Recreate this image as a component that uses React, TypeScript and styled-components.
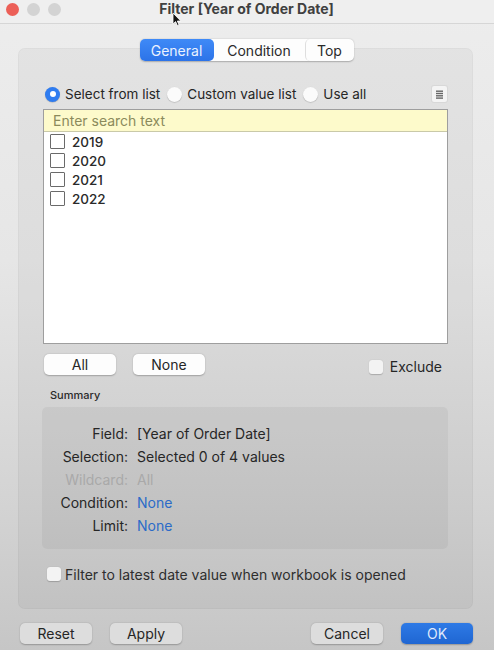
import React from "react";
import styled, { createGlobalStyle } from "styled-components";

const Global = createGlobalStyle`
  html, body { margin: 0; padding: 0; }
  body { width: 494px; height: 650px; overflow: hidden; font-family: Inter, "Noto Sans", "Liberation Sans", sans-serif; }
  * { box-sizing: border-box; }
`;

const Window = styled.div`
  position: relative;
  width: 494px;
  height: 650px;
  display: flex;
  flex-direction: column;
  background: linear-gradient(180deg, #ededed 0%, #e6e6e6 40%, #d2d2d2 80%, #c6c6c6 100%);
  color: #262626;
`;

const TitleBar = styled.div`
  height: 24px;
  flex: none;
  display: flex;
  align-items: center;
  padding-left: 6px;
  border-bottom: 1px solid #d6d6d6;
  background: #efefef;
  position: relative;
`;

const Light = styled.span<{ $c: string }>`
  width: 13px;
  height: 13px;
  border-radius: 50%;
  background: ${(p) => p.$c};
  margin-right: 8px;
  margin-top: -5px;
`;

const Title = styled.div`
  position: absolute;
  left: 0;
  right: 0;
  top: 0;
  padding-right: 1px;
  text-align: center;
  font-weight: 700;
  font-size: 14px;
  line-height: 17px;
  color: #404040;
`;

const Cursor = styled.svg`
  position: absolute;
  left: 172px;
  top: 12px;
`;

const Body = styled.div`
  flex: 1;
  display: flex;
  flex-direction: column;
  padding: 15px 21px 0 18px;
`;

const Tabs = styled.div`
  align-self: center;
  margin-left: 2px;
  display: flex;
  height: 22px;
  background: #fdfdfd;
  border-radius: 5px;
  box-shadow: 0 0.5px 1.5px rgba(0, 0, 0, 0.25);
  position: relative;
  z-index: 1;
`;

const Tab = styled.div<{ $w: number; $active?: boolean; $sep?: boolean }>`
  width: ${(p) => p.$w}px;
  display: flex;
  align-items: center;
  justify-content: center;
  font-size: 14px;
  border-radius: 5px;
  color: ${(p) => (p.$active ? "#eaf2ff" : "#2a2a2a")};
  background: ${(p) => (p.$active ? "linear-gradient(#3f8af7, #2c73e8)" : "transparent")};
  border-left: ${(p) => (p.$sep ? "1px solid #dedede" : "none")};
`;

const Group = styled.div`
  margin-top: -13px;
  height: 561px;
  background: rgba(0, 0, 0, 0.035);
  border-radius: 7px;
  border: 1px solid rgba(0, 0, 0, 0.03);
  padding: 36px 24px 0 24px;
  display: flex;
  flex-direction: column;
`;

const RadioRow = styled.div`
  display: flex;
  align-items: center;
  height: 18px;
  font-size: 13.5px;
`;

const Radio = styled.span<{ $on?: boolean }>`
  width: 15px;
  height: 15px;
  border-radius: 50%;
  margin: 0 5px 0 2px;
  background: ${(p) => (p.$on ? "#2f7cf0" : "#fbfbfb")};
  box-shadow: 0 0.5px 1px rgba(0, 0, 0, 0.25);
  display: flex;
  align-items: center;
  justify-content: center;
  &::after {
    content: "";
    width: 6px;
    height: 6px;
    border-radius: 50%;
    background: ${(p) => (p.$on ? "#fff" : "transparent")};
  }
`;

const RadioLabel = styled.span`
  margin-right: 5px;
`;

const MenuBtn = styled.div`
  margin-left: auto;
  margin-right: 1px;
  width: 15px;
  height: 16px;
  background: #f4f4f4;
  border-radius: 2px;
  box-shadow: 0 0 0 1px #d8d8d8;
  display: flex;
  align-items: center;
  justify-content: center;
`;

const ListBox = styled.div`
  margin-top: 6px;
  height: 235px;
  background: #fff;
  border: 1.5px solid #9e9e9e;
  display: flex;
  flex-direction: column;
`;

const Search = styled.div`
  height: 22px;
  background: #fdfacb;
  border-bottom: 1px solid #c9c9a8;
  font-size: 14px;
  color: #8b8a5c;
  padding-left: 9px;
  display: flex;
  align-items: center;
`;

const Items = styled.div`
  padding: 0 0 0 6px;
`;

const Item = styled.div`
  height: 19px;
  display: flex;
  align-items: center;
  font-size: 13.5px;
  font-weight: 500;
  color: #2a2a2a;
`;

const Check = styled.span<{ $size?: number; $soft?: boolean }>`
  width: ${(p) => p.$size ?? 15}px;
  height: ${(p) => p.$size ?? 15}px;
  border: ${(p) => (p.$soft ? "none" : "1.5px solid #6a6a6a")};
  border-radius: ${(p) => (p.$soft ? 3 : 1)}px;
  background: ${(p) => (p.$soft ? "#f3f3f3" : "#fff")};
  box-shadow: ${(p) => (p.$soft ? "0 0.5px 1px rgba(0,0,0,0.2)" : "none")};
  margin-right: 7px;
  flex: none;
`;

const ButtonRow = styled.div`
  margin-top: 10px;
  display: flex;
  align-items: center;
  height: 21px;
  padding-left: 1px;
`;

const Btn = styled.div<{ $gap?: number; $primary?: boolean; $dim?: boolean }>`
  width: 72px;
  height: 21px;
  margin-right: ${(p) => p.$gap ?? 0}px;
  border-radius: 5px;
  display: flex;
  align-items: center;
  justify-content: center;
  font-size: 14px;
  color: ${(p) => (p.$primary ? "#dfe9fb" : "#262626")};
  background: ${(p) =>
    p.$primary ? "linear-gradient(#2e7ae6, #1f66d2)" : p.$dim ? "#dddddd" : "#fdfdfd"};
  box-shadow: 0 0.5px 1.5px rgba(0, 0, 0, 0.25);
`;

const Exclude = styled.div`
  margin-left: auto;
  margin-right: 6px;
  margin-top: 4px;
  display: flex;
  align-items: center;
  font-size: 14px;
`;

const SummaryLabel = styled.div`
  margin-top: 14px;
  padding-left: 7px;
  font-size: 11px;
  font-weight: 500;
  line-height: 12px;
  color: #2a2a2a;
`;

const SummaryBox = styled.div`
  margin-top: 6px;
  margin-left: -1px;
  height: 142px;
  background: rgba(0, 0, 0, 0.045);
  border-radius: 5px;
  padding-top: 15px;
  display: grid;
  grid-template-columns: 86px 1fr;
  grid-auto-rows: 23px;
  column-gap: 9px;
  align-content: start;
  font-size: 14px;
`;

const Key = styled.div<{ $dim?: boolean }>`
  text-align: right;
  color: ${(p) => (p.$dim ? "#a9a9a9" : "#262626")};
  line-height: 23px;
`;

const Val = styled.div<{ $tone?: "dim" | "link" }>`
  line-height: 23px;
  color: ${(p) => (p.$tone === "dim" ? "#a9a9a9" : p.$tone === "link" ? "#2b6bc8" : "#262626")};
`;

const LatestRow = styled.div`
  margin-top: 16px;
  padding-left: 4px;
  display: flex;
  align-items: center;
  height: 18px;
  font-size: 14px;
  color: #2e2e2e;
  & > span:first-child {
    margin-right: 4px;
  }
`;

const Footer = styled.div`
  margin-top: 14px;
  display: flex;
  align-items: center;
  padding-left: 2px;
`;

const Spacer = styled.div`
  flex: 1;
`;

export default function App() {
  return (
    <>
      <Global />
      <Window>
        <TitleBar>
          <Light $c="#ec5f57" />
          <Light $c="#d3d3d3" />
          <Light $c="#d3d3d3" />
          <Title>Filter [Year of Order Date]</Title>
          <Cursor width="10" height="15" viewBox="0 0 10 15">
            <path d="M1 1 L1 12 L3.6 9.6 L5.4 13.6 L7 12.9 L5.3 9 L8.8 9 Z" fill="#111" stroke="#fff" strokeWidth="0.8" />
          </Cursor>
        </TitleBar>
        <Body>
          <Tabs>
            <Tab $w={74} $active>General</Tab>
            <Tab $w={91}>Condition</Tab>
            <Tab $w={49} $sep>Top</Tab>
          </Tabs>
          <Group>
            <RadioRow>
              <Radio $on />
              <RadioLabel>Select from list</RadioLabel>
              <Radio />
              <RadioLabel>Custom value list</RadioLabel>
              <Radio />
              <RadioLabel>Use all</RadioLabel>
              <MenuBtn>
                <svg width="9" height="9" viewBox="0 0 9 9">
                  <rect x="1" y="0.5" width="7" height="1.4" fill="#666" />
                  <rect x="1" y="2.8" width="7" height="1.4" fill="#666" />
                  <rect x="1" y="5.1" width="7" height="1.4" fill="#666" />
                  <rect x="1" y="7.4" width="7" height="1.4" fill="#666" />
                </svg>
              </MenuBtn>
            </RadioRow>
            <ListBox>
              <Search>Enter search text</Search>
              <Items>
                {["2019", "2020", "2021", "2022"].map((y) => (
                  <Item key={y}>
                    <Check />
                    {y}
                  </Item>
                ))}
              </Items>
            </ListBox>
            <ButtonRow>
              <Btn $gap={17}>All</Btn>
              <Btn>None</Btn>
              <Exclude>
                <Check $soft $size={14} />
                Exclude
              </Exclude>
            </ButtonRow>
            <SummaryLabel>Summary</SummaryLabel>
            <SummaryBox>
              <Key>Field:</Key>
              <Val>[Year of Order Date]</Val>
              <Key>Selection:</Key>
              <Val>Selected 0 of 4 values</Val>
              <Key $dim>Wildcard:</Key>
              <Val $tone="dim">All</Val>
              <Key>Condition:</Key>
              <Val $tone="link">None</Val>
              <Key>Limit:</Key>
              <Val $tone="link">None</Val>
            </SummaryBox>
            <LatestRow>
              <Check $soft $size={14} />
              Filter to latest date value when workbook is opened
            </LatestRow>
          </Group>
          <Footer>
            <Btn $gap={18} $dim>Reset</Btn>
            <Btn $dim>Apply</Btn>
            <Spacer />
            <Btn $gap={18} $dim>Cancel</Btn>
            <Btn $primary>OK</Btn>
          </Footer>
        </Body>
      </Window>
    </>
  );
}
